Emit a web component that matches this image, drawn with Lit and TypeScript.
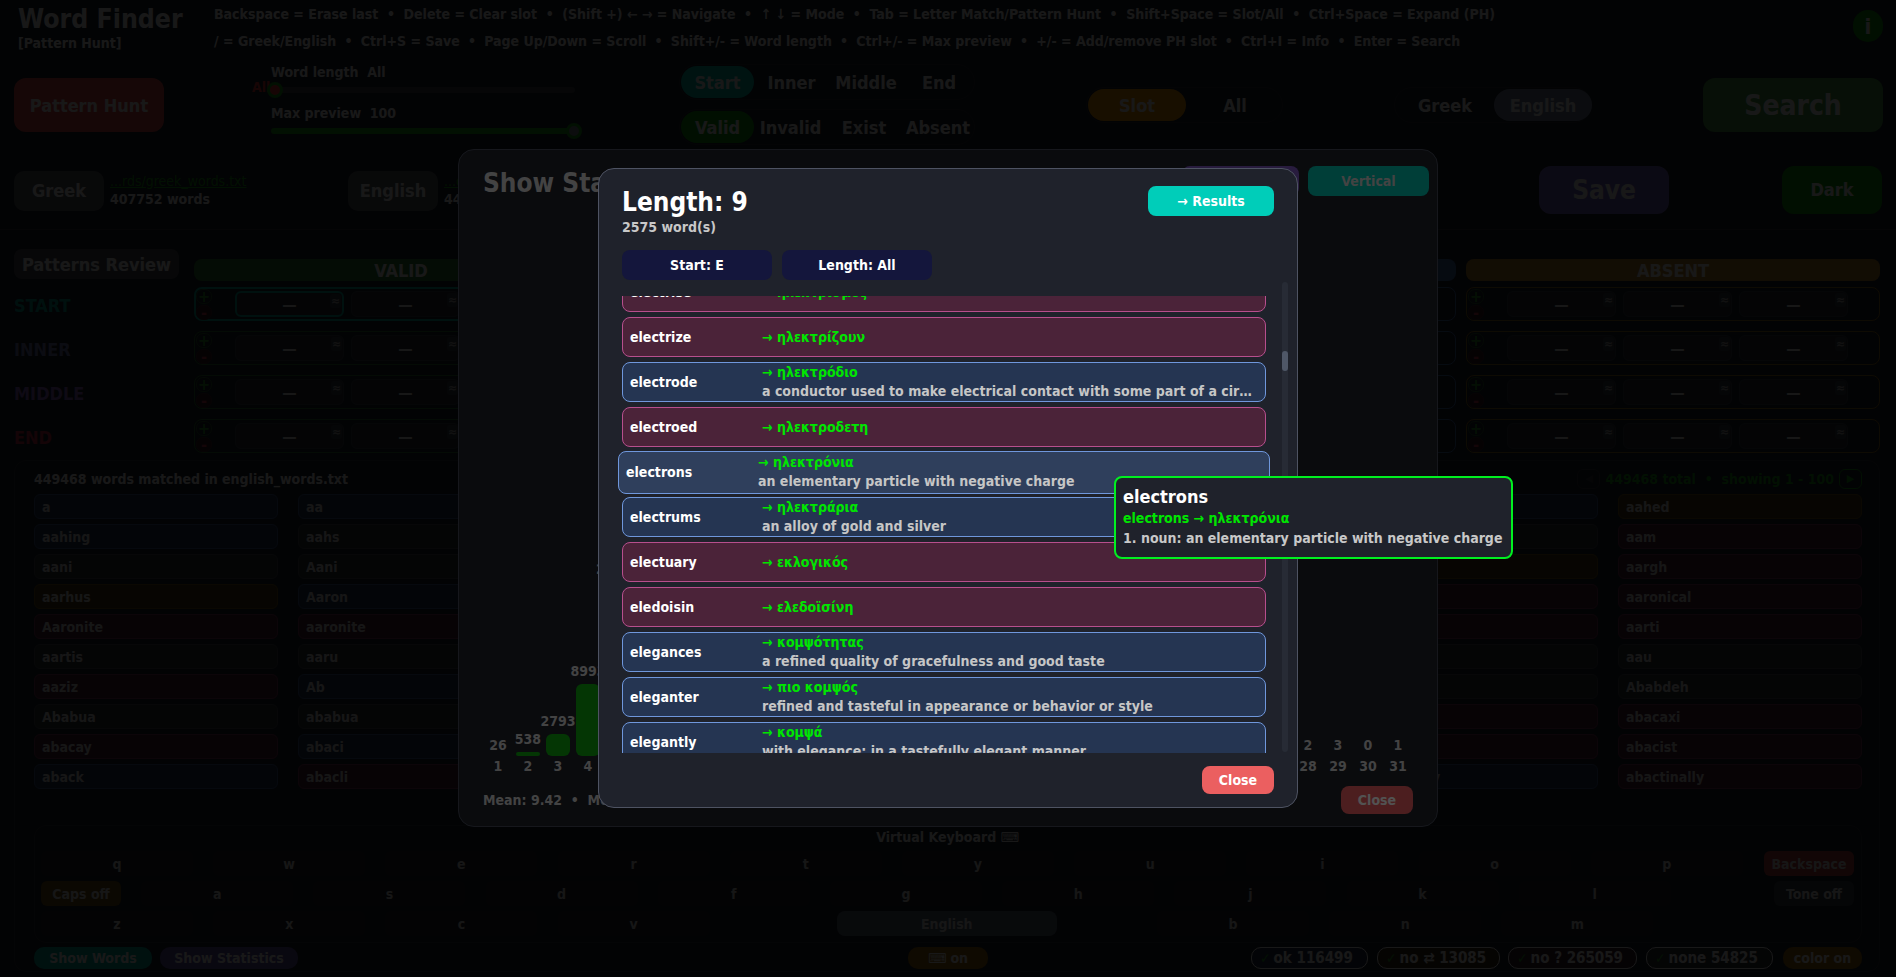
import { LitElement, html, css } from "lit";
import { customElement } from "lit/decorators.js";

const HELP1 = ["Backspace = Erase last","Delete = Clear slot","(Shift +) ← → = Navigate","↑ ↓ = Mode","Tab = Letter Match/Pattern Hunt","Shift+Space = Slot/All","Ctrl+Space = Expand (PH)"];
const HELP2 = ["/ = Greek/English","Ctrl+S = Save","Page Up/Down = Scroll","Shift+/- = Word length","Ctrl+/- = Max preview","+/- = Add/remove PH slot","Ctrl+I = Info","Enter = Search"];
const ROWS = [["START","start"],["INNER","inner"],["MIDDLE","middle"],["END","end"]];
const COLS = [["VALID","valid"],["INVALID","invalid"],["EXIST","exist"],["ABSENT","absent"]];
type W = [string,string];
const WORDS: W[] = [
["a","b"],["aa","b"],["aah","n"],["aahed","a"],["aal","n"],["aalii","b"],["aahed","a"],
["aahing","b"],["aahs","n"],["aal","b"],["aalii","r"],["aals","n"],["aam","n"],["aam","r"],
["aani","n"],["Aani","n"],["aardvark","b"],["aardwolf","b"],["aargh","r"],["aardvarks","a"],["aargh","r"],
["aarhus","a"],["Aaron","b"],["Aaronic","b"],["aaronical","r"],["aaronite","r"],["Aaronitic","r"],["aaronical","r"],
["Aaronite","r"],["aaronite","r"],["Aaronitic","r"],["aarrgh","r"],["aarrghh","r"],["aarti","r"],["aarti","r"],
["aartis","n"],["aaru","n"],["aas","n"],["aasvogel","b"],["aasvogels","b"],["aau","n"],["aau","n"],
["aaziz","r"],["Ab","b"],["aba","n"],["ababa","n"],["Ababdeh","n"],["Ababdeh","n"],["Ababdeh","n"],
["Ababua","n"],["ababua","n"],["abac","r"],["abaca","b"],["abacas","b"],["abacate","r"],["abacaxi","r"],
["abacay","r"],["abaci","b"],["abacinate","r"],["abacination","b"],["abacisci","r"],["abaciscus","r"],["abacist","r"],
["aback","b"],["abacli","r"],["abacot","r"],["abacterial","b"],["abactinal","b"],["abactinally","b"],["abactinally","r"],
];
const KEYS1 = "qwertyuiop".split("");
const KEYS2 = "asdfghjkl".split("");
type L = { w:string; t:string; d?:string; hover?:boolean };
const LIST: L[] = [
{w:"electrise",t:"ηλεκτρισμός"},
{w:"electrize",t:"ηλεκτρίζουν"},
{w:"electrode",t:"ηλεκτρόδιο",d:"a conductor used to make electrical contact with some part of a circuit in a device"},
{w:"electroed",t:"ηλεκτροδετη"},
{w:"electrons",t:"ηλεκτρόνια",d:"an elementary particle with negative charge",hover:true},
{w:"electrums",t:"ηλεκτράρια",d:"an alloy of gold and silver"},
{w:"electuary",t:"εκλογικός"},
{w:"eledoisin",t:"ελεδοϊσίνη"},
{w:"elegances",t:"κομψότητας",d:"a refined quality of gracefulness and good taste"},
{w:"eleganter",t:"πιο κομψός",d:"refined and tasteful in appearance or behavior or style"},
{w:"elegantly",t:"κομψά",d:"with elegance; in a tastefully elegant manner"},
];
const STATS = [26,538,2793,8993,21750,38210,52200,60120,61380,54760,44310,33120,22980,14870,8930,4980,2540,1210,560,260,120,54,22,10,6,4,3,2,3,0,1];

@customElement("app-root")
export class AppRoot extends LitElement {
  static styles = css`
    :host { display:block; position:relative; width:1896px; height:977px; overflow:hidden; background:#1b1f2a; font-family:"DejaVu Sans Condensed","DejaVu Sans",sans-serif; font-stretch:condensed; font-weight:700; color:#f0f0f0; font-size:14px; }
    *{box-sizing:border-box;}
    button{font:inherit;font-stretch:inherit;color:inherit;border:0;background:none;padding:0;display:flex;align-items:center;justify-content:center;}
    .header{display:flex;height:64px;padding-left:18px;}
    .brand{width:196px;padding-top:4px;}
    .brand h1{margin:0;font-size:26.4px;line-height:30px;font-weight:700;}
    .brand div{font-size:14px;line-height:18px;}
    .help{padding-top:1px;font-size:14px;line-height:26.5px;white-space:nowrap;flex:1;}
    .help span+span::before{content:"•";margin:0 8.6px;}
    .help .l2 span+span::before{margin:0 8.2px;}
    .info{width:30px;height:32px;border-radius:15px;background:#119a11;margin:10px 13px 0 0;font-size:22px;}
    .controls{display:flex;height:86px;padding-left:14px;align-items:flex-start;}
    .big{border-radius:12px;height:54px;margin-top:14px;}
    .ph{width:150px;background:#d94a48;font-size:18px;}
    .sliders{width:304px;margin-left:107px;position:relative;}
    .slabel{line-height:18px;height:18px;}
    .sliders .slabel:first-child{margin-top:-1px;}
    .track{height:6px;border-radius:3px;background:#3c3f47;margin:6px 0 11px;position:relative;}
    .track.full{background:#1c9c1c;}
    .thumb{position:absolute;top:-5px;width:16px;height:16px;border-radius:50%;background:#7a7f88;border:3px solid #1c9c1c;}
    .thumb.red{background:#e53935;}
    .alltag{position:absolute;left:-19px;top:-8px;color:#e53935;font-size:14px;}
    .modes{width:296px;margin-left:104px;display:flex;flex-direction:column;gap:9px;}
    .seg{display:flex;align-items:center;height:36px;border:1px solid #2c303a;border-radius:18px;padding:0 1px;font-size:18px;}
    .seg b{height:32px;display:flex;align-items:center;justify-content:center;border-radius:16px;flex:none;}
    .modes .seg b.on{width:73px;}
    .seg b.on.teal{background:#00b8a8;}
    .seg b.on.green{background:#129a12;}
    .seg b.on.amber{background:#e8960b;}
    .seg b.on.slate{background:#6c7c97;}
    .binary{width:197px;margin-left:111px;margin-top:23px;}
    .binary b{width:98px;}
    .langs{width:198px;}
    .search{width:180px;margin-left:111px;background:#449944;font-size:28px;}
    .files{display:flex;height:80px;padding:0 14px;align-items:center;border-bottom:1px solid #33373f;}
    .lang{width:90px;height:40px;border-radius:10px;background:#55585f;font-size:18px;margin-top:2px;}
    .file{margin-left:6px;width:238px;line-height:18px;}
    .file u{display:block;color:#17a117;font-weight:400;}
    .spacer{flex:1;}
    .save{width:130px;height:48px;border-radius:12px;background:#7565c0;font-size:26px;}
    .dark{width:100px;height:48px;border-radius:12px;background:#129a12;font-size:18px;margin-left:113px;}
    .pat-head,.pat-rows{display:grid;grid-template-columns:170px repeat(4,414px);column-gap:10px;padding-left:14px;}
    .pat-head{margin-top:19px;align-items:end;margin-bottom:6px;height:32px;}
    .pr{height:30px;width:165px;border-radius:8px;background:#4a4d55;display:flex;align-items:center;justify-content:center;font-size:18px;align-self:start;}
    .colh{height:22px;border-radius:8px;display:flex;align-items:center;justify-content:center;font-size:18px;}
    .colh.valid{background:#2e7d32;} .colh.invalid{background:#b33a3a;} .colh.exist{background:#3f6aa8;} .colh.absent{background:#b5842a;}
    .pat-rows{row-gap:10px;}
    .rowname{font-size:18px;line-height:38px;height:34px;}
    .rowname.start{color:#00a090;} .rowname.inner{color:#7478b0;} .rowname.middle{color:#8a60c0;} .rowname.end{color:#c02c48;}
    .pbox{height:34px;border:1px solid #444;border-radius:8px;display:flex;align-items:center;padding-left:1px;gap:7px;}
    .pbox.valid{border-color:#2e6d32;} .pbox.invalid{border-color:#a03a3a;} .pbox.exist{border-color:#3f6aa8;} .pbox.absent{border-color:#8f6c24;}
    .pbox.focus{border:2px solid #00a896;padding-left:0;}
    .pm{width:16px;display:flex;flex-direction:column;margin-right:16px;gap:1px;}
    .pm i{font-style:normal;height:15px;line-height:13px;font-size:16px;border:1px solid #2a5a2a;border-radius:7px;text-align:center;color:#2e9a2e;display:block;}
    .pm i.minus{color:#c2334f;border-color:#40222c;background:#3a1a24;}
    .slot{width:109px;height:26px;border:1px solid #3a404c;background:#2a2e3a;border-radius:6px;position:relative;display:flex;align-items:center;justify-content:center;color:#e0e0e0;font-size:16px;}
    .slot.focus{border:2px solid #00a896;}
    .slot em{position:absolute;right:1px;top:1px;font-style:normal;font-size:12px;line-height:12px;padding:1px;background:#3a3e48;border-radius:3px;color:#aaa;}
    .results{margin:7px 16px 0 14px;height:512px;border:1px solid #30343c;border-radius:12px;padding:0 17px 0 19px;}
    .rhead{display:flex;align-items:center;justify-content:space-between;height:33px;padding-top:2px;font-size:14px;}
    .pager{display:flex;align-items:center;color:#1c9c1c;font-size:14px;gap:5px;}
    .pager i{font-style:normal;width:23px;height:20px;border:1px solid #1c9c1c;border-radius:6px;display:flex;align-items:center;justify-content:center;font-size:11px;color:#1c9c1c;}
    .pager i.off{border-color:#33383f;color:#33383f;}
    .words{display:grid;grid-template-columns:repeat(7,244px);column-gap:20px;row-gap:5px;grid-auto-rows:25px;}
    .w{border:1px solid;border-radius:6px;padding-left:7px;display:flex;align-items:center;font-size:14px;white-space:nowrap;overflow:hidden;color:#d8d8d8;}
    .w.b{background:#253552;border-color:#3c5a8c;} .w.r{background:#4b2339;border-color:#7a3658;} .w.n{background:#2f3238;border-color:#44474e;} .w.a{background:#4a3a1c;border-color:#705418;}
    .kb{margin-top:36px;height:118px;border:1px solid #30343c;border-radius:12px;padding:0 7px 0 6px;}
    .kbt{height:25px;text-align:center;line-height:23px;font-size:14px;}
    .krow{display:flex;gap:20.2px;height:25px;margin-bottom:5px;}
    .k{width:152px;height:25px;border-radius:6px;background:#26282e;font-size:14px;flex:none;color:#d8d8d8;}
    .bs{width:90px;background:#b33e3e;margin-left:auto;}
    .caps{width:80px;background:#6e521a;}
    .tone{width:80px;background:#3a3d44;margin-left:auto;}
    .sp1{margin-left:107px;} .sp2{margin-left:80px;}
    .space{width:220px;background:#556074;border-radius:8px;}
    .bottom{display:flex;align-items:center;height:22px;margin-top:4px;}
    .chip{height:22px;border-radius:10px;display:flex;align-items:center;justify-content:center;font-size:14px;flex:none;}
    .sw{width:118px;background:#00a898;} .ss{width:138px;background:#5c4ea0;margin-left:8px;}
    .kbon{width:80px;background:#93620f;margin-left:610px;}
    .chip.opt{border:1px solid;padding:0 0 0 8px;gap:3px;font-size:15px;white-space:nowrap;justify-content:flex-start;}
    .opt s{text-decoration:none;color:#2aa02a;font-weight:400;font-size:14px;}
    .ok{width:117px;margin-left:263px;border-color:#36507c;background:#252f45;} .nos{width:123px;margin-left:9px;border-color:#8f6c24;background:#3a301c;} .noq{width:129px;margin-left:8px;border-color:#8f3f6a;background:#3a2030;} .none{width:127px;margin-left:9px;border-color:#484b52;background:#2f3238;}
    .colr{width:79px;margin-left:10px;background:#93620f;}
    .overlay{position:absolute;inset:0;background:rgba(0,0,0,.68);}
    .stats{position:absolute;left:458px;top:149px;width:980px;height:678px;background:#1f222b;border:1px solid #444a58;border-radius:16px;padding:16px 24px 0;color:#d0d0d0;}
    .shead{display:flex;align-items:center;height:32px;}
    .shead h2{margin:0;font-size:26px;line-height:32px;flex:1;padding-top:1px;}
    .sbtn{width:117px;height:30px;border-radius:8px;background:#7e57c2;margin-bottom:3px;}
    .vert{width:121px;height:30px;border-radius:8px;background:#00c0ae;margin:0 -16px 3px 9px;}
    .chart{display:flex;align-items:flex-end;height:578px;}
    .cc{width:30px;display:flex;flex-direction:column;align-items:center;flex:none;}
    .cc .v{line-height:18px;margin-bottom:4px;white-space:nowrap;}
    .cc .v.nil{margin-bottom:2px;}
    .cc .bar{width:24px;background:#0ea80e;border-radius:6px;}
    .cc .n{line-height:20px;height:20px;}
    .sfoot{display:flex;justify-content:space-between;align-items:center;margin-top:10px;height:28px;}
    .sfoot button{width:72px;height:28px;border-radius:8px;background:#eb5f60;color:#fff;}
    .modal{position:absolute;left:598px;top:168px;width:700px;height:640px;background:#1f222b;border:1px solid #4e5362;border-radius:16px;padding:17px 23px 0;color:#fff;}
    .mhead{display:flex;justify-content:space-between;height:49px;}
    .mhead h2{margin:1px 0 0;font-size:26px;line-height:30px;}
    .mhead p{margin:1px 0 0;font-size:14px;line-height:18px;color:#c8c8c8;}
    .res{width:126px;height:30px;border-radius:8px;background:#00cdb9;}
    .filters{display:flex;gap:10px;margin-top:15px;}
    .filters button{width:150px;height:30px;border-radius:8px;background:#14163c;}
    .listwrap{position:relative;margin-top:16px;}
    .list{display:flow-root;height:457px;clip-path:inset(0 -20px 0 -20px);padding-right:8px;}
    .listin{display:flex;flex-direction:column;gap:5px;margin-top:-24px;}
    .row{flex:none;height:40px;border:1px solid;border-radius:8px;display:flex;align-items:center;padding:0 13px 0 7px;}
    .row.red{background:#4b2339;border-color:#b74f8d;}
    .row.blue{background:#253552;border-color:#6f97dc;}
    .row.hover{background:#2f3f5c;height:43px;margin:-1.5px -4px;}
    .row .wd{width:132px;flex:none;}
    .row .tr{min-width:0;flex:1;line-height:19px;}
    .row .t{color:#00e600;}
    .row .d{color:#c6c6c6;white-space:nowrap;overflow:hidden;text-overflow:ellipsis;}
    .sb{position:absolute;left:660px;top:-14px;width:6px;height:470px;border-radius:3px;background:#272b35;}
    .sb i{position:absolute;left:0;top:69px;width:6px;height:20px;border-radius:3px;background:#4f5767;display:block;}
    .mclose{width:72px;height:28px;border-radius:8px;background:#eb5f60;margin:13px 0 0 auto;}
    .tip{position:absolute;left:1114px;top:476px;width:399px;height:83px;background:#1f222b;border:2px solid #00f020;border-radius:8px;padding:7px 7px;line-height:19.5px;white-space:nowrap;color:#fff;}
    .tip h3{margin:0;font-size:18px;line-height:24px;}
    .tip .g{color:#00e600;}
    .tip .dd{color:#c8c8c8;}
  `;

  private word(w: W) { return html`<div class="w ${w[1]}">${w[0]}</div>`; }
  private slot(focus: boolean) { return html`<div class="slot ${focus ? "focus" : ""}">—<em>≈</em></div>`; }

  render() {
    return html`
      <div class="header">
        <div class="brand"><h1>Word Finder</h1><div>[Pattern Hunt]</div></div>
        <div class="help">
          <div>${HELP1.map(h => html`<span>${h}</span>`)}</div>
          <div class="l2">${HELP2.map(h => html`<span>${h}</span>`)}</div>
        </div>
        <button class="info">i</button>
      </div>
      <div class="controls">
        <button class="big ph">Pattern Hunt</button>
        <div class="sliders">
          <div class="slabel">Word length&nbsp; All</div>
          <div class="track"><span class="alltag">All</span><span class="thumb red" style="left:-4px"></span></div>
          <div class="slabel">Max preview&nbsp; 100</div>
          <div class="track full"><span class="thumb" style="left:295px"></span></div>
        </div>
        <div class="modes">
          <div class="seg">
            <b class="on teal">Start</b><b style="width:75px">Inner</b><b style="width:74px">Middle</b><b style="width:72px">End</b>
          </div>
          <div class="seg">
            <b class="on green">Valid</b><b style="width:73px">Invalid</b><b style="width:74px">Exist</b><b style="width:74px">Absent</b>
          </div>
        </div>
        <div class="seg binary"><b class="on amber">Slot</b><b>All</b></div>
        <div class="seg binary langs"><b>Greek</b><b class="on slate">English</b></div>
        <button class="big search">Search</button>
      </div>
      <div class="files">
        <button class="lang">Greek</button>
        <div class="file"><u>...rds/greek_words.txt</u><div>407752 words</div></div>
        <button class="lang">English</button>
        <div class="file"><u>...ds/english_words.txt</u><div>449468 words</div></div>
        <div class="spacer"></div>
        <button class="save">Save</button>
        <button class="dark">Dark</button>
      </div>
      <div class="pat-head">
        <div class="pr">Patterns Review</div>
        ${COLS.map(c => html`<div class="colh ${c[1]}">${c[0]}</div>`)}
      </div>
      <div class="pat-rows">
        ${ROWS.map((r, ri) => html`
          <div class="rowname ${r[1]}">${r[0]}</div>
          ${COLS.map((c, ci) => html`
            <div class="pbox ${c[1]} ${ri === 0 && ci === 0 ? "focus" : ""}">
              <div class="pm"><i>+</i><i class="minus">-</i></div>
              ${this.slot(ri === 0 && ci === 0)}${this.slot(false)}${this.slot(false)}
            </div>`)}
        `)}
      </div>
      <div class="results">
        <div class="rhead">
          <div>449468 words matched in english_words.txt</div>
          <div class="pager"><i class="off">◀</i><span>449468 total&nbsp; •&nbsp; showing 1 - 100</span><i>▶</i></div>
        </div>
        <div class="words">${WORDS.map(w => this.word(w))}</div>
        <div class="kb">
          <div class="kbt">Virtual Keyboard ⌨</div>
          <div class="krow">${KEYS1.map(k => html`<button class="k">${k}</button>`)}<button class="k bs">Backspace</button></div>
          <div class="krow"><button class="k caps">Caps off</button>${KEYS2.map(k => html`<button class="k">${k}</button>`)}<button class="k tone">Tone off</button></div>
          <div class="krow">
            ${"zxcv".split("").map(k => html`<button class="k">${k}</button>`)}
            <button class="k space sp1">English</button>
            <button class="k sp2">b</button><button class="k">n</button><button class="k">m</button>
          </div>
        </div>
        <div class="bottom">
          <div class="chip sw">Show Words</div>
          <div class="chip ss">Show Statistics</div>
          <div class="chip kbon">⌨ on</div>
          <div class="chip opt ok"><s>✓</s>ok 116499</div>
          <div class="chip opt nos"><s>✓</s>no ⇄ 13085</div>
          <div class="chip opt noq"><s>✓</s>no ? 265059</div>
          <div class="chip opt none"><s>✓</s>none 54825</div>
          <div class="chip colr">color on</div>
        </div>
      </div>

      <div class="overlay"></div>
      <div class="stats">
        <div class="shead"><h2>Show Statistics</h2><button class="sbtn">Length</button><button class="vert">Vertical</button></div>
        <div class="chart">
          ${STATS.map((s, i) => html`<div class="cc">
            <div class="v ${s < 100 ? "nil" : ""}">${s}</div>
            ${s >= 100 ? html`<div class="bar" style="height:${Math.max(2, Math.round(s * 0.008))}px"></div>` : ""}
            <div class="n">${i + 1}</div>
          </div>`)}
        </div>
        <div class="sfoot"><div>Mean: 9.42 &nbsp;•&nbsp; Median: 9</div><button>Close</button></div>
      </div>

      <div class="overlay"></div>
      <div class="modal">
        <div class="mhead">
          <div><h2>Length: 9</h2><p>2575 word(s)</p></div>
          <button class="res">→ Results</button>
        </div>
        <div class="filters"><button>Start: E</button><button>Length: All</button></div>
        <div class="listwrap">
          <div class="list"><div class="listin">
            ${LIST.map(l => html`<div class="row ${l.d ? "blue" : "red"} ${l.hover ? "hover" : ""}">
              <div class="wd">${l.w}</div>
              <div class="tr"><div class="t">→ ${l.t}</div>${l.d ? html`<div class="d">${l.d}</div>` : ""}</div>
            </div>`)}
          </div></div>
          <div class="sb"><i></i></div>
        </div>
        <button class="mclose">Close</button>
      </div>
      <div class="tip">
        <h3>electrons</h3>
        <div class="g">electrons → ηλεκτρόνια</div>
        <div class="dd">1. noun: an elementary particle with negative charge</div>
      </div>
    `;
  }
}
